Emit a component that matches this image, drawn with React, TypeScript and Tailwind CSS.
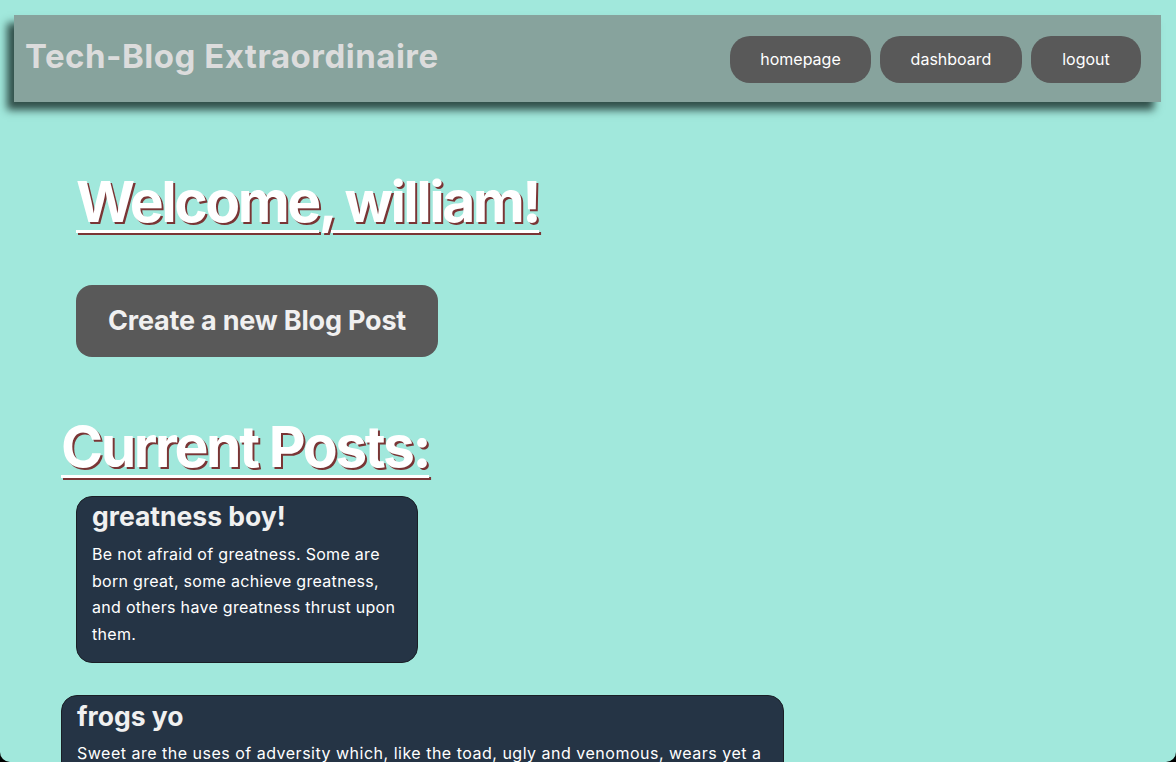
import React from "react";

const ts = "[text-shadow:2px_2px_0_#7a3535]";

export default function App() {
  return (
    <div className="bg-black w-[1176px] h-[762px] overflow-hidden">
      <div
        className="bg-[#a1e8dc] h-[762px] rounded-b-[10px] overflow-hidden pt-[15px] pl-[14px] pr-[15px]"
        style={{ fontFamily: "Inter, 'Noto Sans', sans-serif" }}
      >
        <header className="h-[87px] bg-[#87a39d] shadow-[-7px_8px_8px_rgba(20,40,36,0.8)] flex items-center justify-between pl-[11px] pr-[20px]">
          <h1 className="text-[33px] font-bold text-[#dcdcdc] tracking-[0.5px] -mt-[4px]">
            Tech-Blog Extraordinaire
          </h1>
          <nav className="flex gap-[9px] mt-[1px]">
            <a className="h-[47px] w-[141px] rounded-[20px] bg-[#595959] text-white text-[16px] flex items-center justify-center">
              homepage
            </a>
            <a className="h-[47px] w-[142px] rounded-[20px] bg-[#595959] text-white text-[16px] flex items-center justify-center">
              dashboard
            </a>
            <a className="h-[47px] w-[110px] rounded-[20px] bg-[#595959] text-white text-[16px] flex items-center justify-center">
              logout
            </a>
          </nav>
        </header>

        <main className="pl-[47px] pt-[70px]">
          <div className="pl-[15px]">
            <h2
              className={`text-[57px] leading-[60px] font-bold text-white underline decoration-[3px] underline-offset-[8px] tracking-[-2.5px] ${ts}`}
            >
              Welcome, william!
            </h2>
            <button className="mt-[53px] h-[72px] w-[362px] rounded-[16px] bg-[#595959] text-[#f0f0f0] text-[27px] font-bold tracking-[-0.2px]">
              Create a new Blog Post
            </button>
          </div>

          <h2
            className={`mt-[60px] text-[57px] leading-[60px] font-bold text-white underline decoration-[3px] underline-offset-[8px] tracking-[-2.4px] ${ts}`}
          >
            Current Posts:
          </h2>

          <div className="mt-[19px] ml-[15px] w-[342px] rounded-[16px] bg-[#253445] border border-[#1a1f26] px-[15px] pt-[3px] pb-[15px]">
            <h3 className="text-[26.5px] leading-[32px] font-bold text-[#f0f0f0]">
              greatness boy!
            </h3>
            <p className="mt-[9px] text-[16px] leading-[26.5px] text-white tracking-[0.3px]">
              Be not afraid of greatness. Some are born great, some achieve
              greatness, and others have greatness thrust upon them.
            </p>
          </div>

          <div className="mt-[32px] w-[723px] rounded-t-[16px] bg-[#253445] border border-[#1a1f26] px-[15px] pt-[4px] pb-[15px]">
            <h3 className="text-[26.5px] leading-[32px] font-bold text-[#f0f0f0]">
              frogs yo
            </h3>
            <p className="mt-[8px] text-[16px] leading-[26.5px] text-white tracking-[0.5px]">
              Sweet are the uses of adversity which, like the toad, ugly and
              venomous, wears yet a precious jewel in his head.
            </p>
          </div>
        </main>
      </div>
    </div>
  );
}
